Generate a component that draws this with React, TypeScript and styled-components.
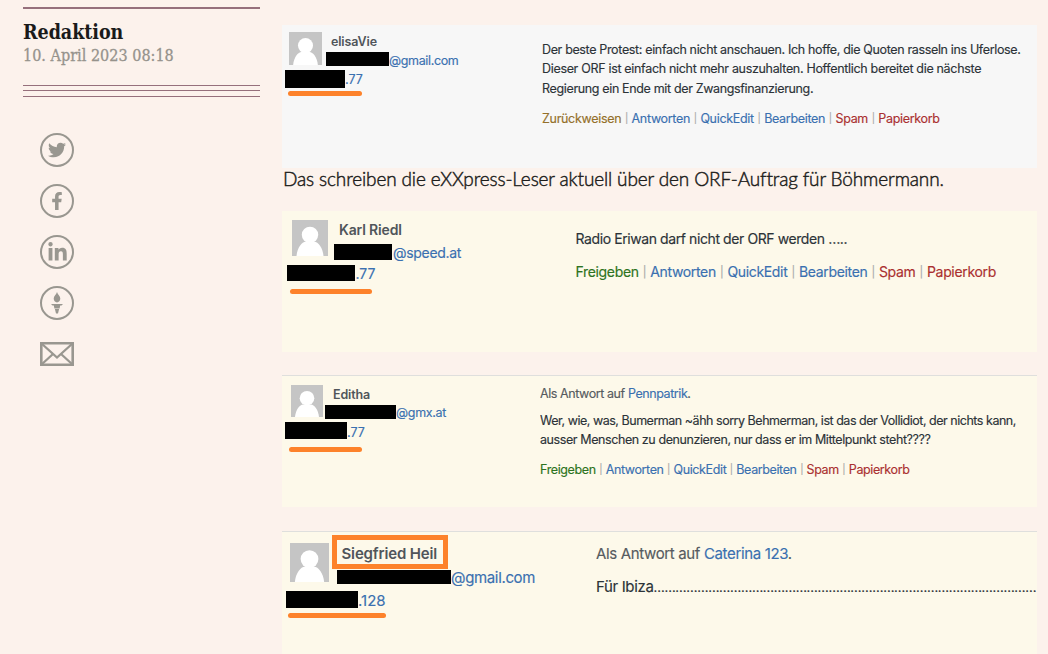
import React, { ReactElement } from 'react'
import styled, { createGlobalStyle } from 'styled-components'
import { FaFacebookF, FaLinkedinIn, FaTwitter } from 'react-icons/fa'

const linkBlue = '#3a70b0'
const marker = '#fd822b'
const iconGrey = '#999790'
const rule = '#96707c'

const GlobalStyle = createGlobalStyle`
  * {
    box-sizing: border-box;
  }

  body {
    margin: 0;
    background: #fcf2ec;
    overflow: hidden;
  }
`

const Page = styled.div`
  display: flex;
  width: 1048px;
  height: 654px;
  overflow: hidden;
`

const Sidebar = styled.aside`
  width: 260px;
  padding: 7px 0 0 23px;
  flex-shrink: 0;
`

const Byline = styled.div`
  height: 79px;
  border-top: 2px solid ${rule};
  padding-top: 10px;
  font-family: 'DejaVu Serif Condensed', 'DejaVu Serif', serif;
  font-stretch: condensed;
  white-space: nowrap;
`

const Source = styled.div`
  font-size: 19.5px;
  line-height: 27px;
  font-weight: 700;
  letter-spacing: -0.05px;
  color: #1a1a1a;
`

const PublishedAt = styled.div`
  font-size: 16px;
  line-height: 20px;
  letter-spacing: 0.02px;
  color: #96938c;
  -webkit-text-stroke: 0.3px #96938c;
`

const TripleRule = styled.div`
  height: 12px;
  margin-top: -1px;
  border-top: 1px solid ${rule};
  border-bottom: 1px solid ${rule};

  &::before {
    content: '';
    display: block;
    margin-top: 4px;
    border-top: 1px solid ${rule};
  }
`

const ShareList = styled.div`
  display: flex;
  flex-direction: column;
  gap: 17px;
  padding: 36px 0 0 17px;
`

const ShareButton = styled.a<{ $plain?: boolean }>`
  display: flex;
  align-items: center;
  justify-content: center;
  width: 34px;
  height: 34px;
  border: ${({ $plain }) => ($plain ? 'none' : `2px solid ${iconGrey}`)};
  border-radius: 50%;
  color: ${iconGrey};
`

const Main = styled.main`
  width: 755px;
  margin-left: 22px;
  padding-top: 25px;
  flex-shrink: 0;
`

const Teaser = styled.p`
  margin: 0;
  height: 43px;
  padding-left: 1px;
  font-family: Lato, sans-serif;
  font-size: 19px;
  font-weight: 300;
  line-height: 22px;
  letter-spacing: -0.135px;
  color: #1d1d1b;
  -webkit-text-stroke: 0.45px #1d1d1b;
  white-space: nowrap;
`

const Card = styled.section<{ $height: number; $bg?: string; $ruled?: boolean; $gap?: number }>`
  display: flex;
  height: ${({ $height }) => $height}px;
  margin-bottom: ${({ $gap = 0 }) => $gap}px;
  background: ${({ $bg = '#fdf9ea' }) => $bg};
  border-top: ${({ $ruled }) => ($ruled ? '1px solid #dfdfdd' : 'none')};
  overflow: hidden;
  font-family: Inter, 'Liberation Sans', sans-serif;
  white-space: nowrap;
`

const AuthorCol = styled.div<{ $width: number; $top: number }>`
  width: ${({ $width }) => $width}px;
  padding-top: ${({ $top }) => $top}px;
  flex-shrink: 0;
`

const Identity = styled.div<{ $left: number; $height: number }>`
  display: flex;
  height: ${({ $height }) => $height}px;
  padding-left: ${({ $left }) => $left}px;
`

const AvatarBox = styled.svg`
  display: block;
  flex-shrink: 0;
`

const Contact = styled.div`
  display: flex;
  flex-direction: column;
`

const Name = styled.div<{ $size: number; $left: number; $height: number }>`
  height: ${({ $height }) => $height}px;
  line-height: 20px;
  padding-left: ${({ $left }) => $left}px;
  font-size: ${({ $size }) => $size}px;
  font-weight: 600;
  letter-spacing: -0.15px;
  color: #50555a;
`

const FramedName = styled(Name)`
  width: 116px;
  height: 34px;
  line-height: 27px;
  margin: -8px 0 1px 3px;
  padding-left: 4.5px;
  border: 5px solid ${marker};
`

const Masked = styled.div<{ $left: number; $height: number; $size: number; $spacing?: number }>`
  display: flex;
  height: ${({ $height }) => $height}px;
  line-height: ${({ $height }) => $height}px;
  padding-left: ${({ $left }) => $left}px;
  font-size: ${({ $size }) => $size}px;
  letter-spacing: ${({ $spacing = 0 }) => $spacing}px;
  color: ${linkBlue};
  -webkit-text-stroke: 0.15px ${linkBlue};
`

const Bar = styled.span<{ $width: number }>`
  width: ${({ $width }) => $width}px;
  background: #000;
  flex-shrink: 0;
`

const MaskedText = styled.span<{ $shift: number; $left?: number }>`
  padding-top: ${({ $shift }) => $shift}px;
  padding-left: ${({ $left = 0 }) => $left}px;
`

const Underline = styled.div<{ $left: number; $width: number; $top: number }>`
  width: ${({ $width }) => $width}px;
  height: 5px;
  margin: ${({ $top, $left }) => `${$top}px 0 0 ${$left}px`};
  border-radius: 2.5px;
  background: ${marker};
`

const Body = styled.div<{ $size: number; $top: number; $spacing?: number }>`
  flex: 1;
  min-width: 0;
  overflow: hidden;
  padding-top: ${({ $top }) => $top}px;
  font-size: ${({ $size }) => $size}px;
  letter-spacing: ${({ $spacing = 0 }) => $spacing}px;
  color: #2c3338;
  -webkit-text-stroke: 0.15px currentColor;
`

const Line = styled.div<{ $height?: number; $spacing?: number }>`
  height: ${({ $height = 20 }) => $height}px;
  line-height: 20px;
  ${({ $spacing }) => $spacing !== undefined && `letter-spacing: ${$spacing}px;`}
`

const ReplyTo = styled(Line)`
  color: #565b60;

  a {
    color: ${linkBlue};
  }
`

const Dots = styled.span`
  font-size: 13px;
  letter-spacing: -0.3px;
`

const Actions = styled.div<{ $gap: number; $spacing: number }>`
  display: flex;
  line-height: 20px;
  letter-spacing: ${({ $spacing }) => $spacing}px;

  a + a::before {
    content: '|';
    position: relative;
    top: -1px;
    margin: 0 ${({ $gap }) => $gap}px;
    font-size: 0.8em;
    color: #a9aaa8;
  }
`

const tones = {
  approve: '#2d7320',
  reject: '#94702a',
  link: linkBlue,
  danger: '#aa3030',
}

const Action = styled.a<{ $tone: keyof typeof tones }>`
  color: ${({ $tone }) => tones[$tone]};
`

const Avatar = ({ size }: { size: number }): ReactElement => (
  <AvatarBox width={size} height={size} viewBox="0 0 32 32">
    <rect width="32" height="32" fill="#c5c5c5" />
    <circle cx="16" cy="13.2" r="7.3" fill="#fff" />
    <path d="M4 32C4.600 24.500 9 19.400 12 19.400h8c3 0 7.400 5.100 8 12.600z" fill="#fff" />
  </AvatarBox>
)

const Torch = (): ReactElement => (
  <svg width="12" height="22" viewBox="0 0 12 22" fill="currentColor">
    <path d="M6 0C6.600 2.500 9.300 3.800 9.300 6.500 9.300 8.700 7.800 10 6 10.500 4.200 10 2.700 8.700 2.700 6.500 2.700 3.800 5.400 2.500 6 0z" />
    <path d="M0 12h12l-1.500 1.500h-9zM2.800 13.500h6.400l-.6 3H3.400zM3.900 17h4.200L7 21.500H5z" />
  </svg>
)

const Envelope = (): ReactElement => (
  <svg width="34" height="24" viewBox="0 0 34 24" fill="none" stroke="currentColor" strokeWidth="2.600">
    <path d="M1.300 1.300h31.400v21.400H1.300z" />
    <path d="M1.500 1.500L17 15.500 32.500 1.500M1.500 22.500l11.500-10.500M32.500 22.500L21 12" strokeWidth="2.300" />
  </svg>
)

interface ActionBarProps {
  approved?: boolean
  gap: number
  spacing: number
}

const ActionBar = ({ approved, gap, spacing }: ActionBarProps): ReactElement => (
  <Actions $gap={gap} $spacing={spacing}>
    <Action $tone={approved ? 'reject' : 'approve'}>{approved ? 'Zurückweisen' : 'Freigeben'}</Action>
    <Action $tone="link">Antworten</Action>
    <Action $tone="link">QuickEdit</Action>
    <Action $tone="link">Bearbeiten</Action>
    <Action $tone="danger">Spam</Action>
    <Action $tone="danger">Papierkorb</Action>
  </Actions>
)

const App = (): ReactElement => (
  <>
    <GlobalStyle />
    <Page>
      <Sidebar>
        <Byline>
          <Source>Redaktion</Source>
          <PublishedAt>10. April 2023 08:18</PublishedAt>
        </Byline>
        <TripleRule />
        <ShareList>
          <ShareButton><FaTwitter size={18} /></ShareButton>
          <ShareButton><FaFacebookF size={18} /></ShareButton>
          <ShareButton><FaLinkedinIn size={21} /></ShareButton>
          <ShareButton><Torch /></ShareButton>
          <ShareButton $plain><Envelope /></ShareButton>
        </ShareList>
      </Sidebar>

      <Main>
        <Card $height={143} $bg="#f7f7f7">
          <AuthorCol $width={260} $top={7}>
            <Identity $left={7} $height={38}>
              <Avatar size={33} />
              <Contact>
                <Name $size={12.5} $left={9} $height={20}>elisaVie</Name>
                <Masked $left={4} $height={14} $size={12.5} $spacing={-0.35}>
                  <Bar $width={63} />
                  <MaskedText $shift={2}>@gmail.com</MaskedText>
                </Masked>
              </Contact>
            </Identity>
            <Masked $left={3} $height={18} $size={12.5}>
              <Bar $width={60} />
              <MaskedText $shift={1}>.77</MaskedText>
            </Masked>
            <Underline $left={6} $width={74} $top={3} />
          </AuthorCol>
          <Body $size={12.5} $top={14.6} $spacing={-0.35}>
            <Line $height={19.7}>Der beste Protest: einfach nicht anschauen. Ich hoffe, die Quoten rasseln ins Uferlose.</Line>
            <Line $height={19.7} $spacing={-0.32}>Dieser ORF ist einfach nicht mehr auszuhalten. Hoffentlich bereitet die nächste</Line>
            <Line $height={30}>Regierung ein Ende mit der Zwangsfinanzierung.</Line>
            <ActionBar approved gap={3.65} spacing={-0.31} />
          </Body>
        </Card>

        <Teaser>Das schreiben die eXXpress-Leser aktuell über den ORF-Auftrag für Böhmermann.</Teaser>

        <Card $height={141} $gap={23}>
          <AuthorCol $width={293.5} $top={9}>
            <Identity $left={10} $height={45}>
              <Avatar size={36} />
              <Contact>
                <Name $size={14} $left={11} $height={24}>Karl Riedl</Name>
                <Masked $left={6} $height={16} $size={14} $spacing={-0.3}>
                  <Bar $width={58} />
                  <MaskedText $shift={1} $left={1}>@speed.at</MaskedText>
                </Masked>
              </Contact>
            </Identity>
            <Masked $left={5} $height={16} $size={14}>
              <Bar $width={68} />
              <MaskedText $shift={1} $left={0.5}>.77</MaskedText>
            </Masked>
            <Underline $left={8} $width={82} $top={8} />
          </AuthorCol>
          <Body $size={14} $top={18} $spacing={-0.41}>
            <Line $height={33}>Radio Eriwan darf nicht der ORF werden …..</Line>
            <ActionBar gap={4.1} spacing={-0.34} />
          </Body>
        </Card>

        <Card $height={132} $gap={24} $ruled>
          <AuthorCol $width={258} $top={9}>
            <Identity $left={9} $height={37}>
              <Avatar size={32} />
              <Contact>
                <Name $size={12.5} $left={10} $height={20}>Editha</Name>
                <Masked $left={2} $height={14} $size={12.5} $spacing={-0.3}>
                  <Bar $width={71} />
                  <MaskedText $shift={1}>@gmx.at</MaskedText>
                </Masked>
              </Contact>
            </Identity>
            <Masked $left={3} $height={17} $size={12.5}>
              <Bar $width={62} />
              <MaskedText $shift={2}>.77</MaskedText>
            </Masked>
            <Underline $left={7} $width={73} $top={8} />
          </AuthorCol>
          <Body $size={12.5} $top={8} $spacing={-0.41}>
            <ReplyTo $height={27} $spacing={-0.42}>Als Antwort auf <a>Pennpatrik</a>.</ReplyTo>
            <Line $height={19} $spacing={-0.475}>Wer, wie, was, Bumerman ~ähh sorry Behmerman, ist das der Vollidiot, der nichts kann,</Line>
            <Line $height={29.6}>ausser Menschen zu denunzieren, nur dass er im Mittelpunkt steht????</Line>
            <ActionBar gap={3.5} spacing={-0.38} />
          </Body>
        </Card>

        <Card $height={130} $ruled>
          <AuthorCol $width={314} $top={11}>
            <Identity $left={8} $height={48}>
              <Avatar size={39} />
              <Contact>
                <FramedName $size={15} $left={5} $height={34}>Siegfried Heil</FramedName>
                <Masked $left={8} $height={14} $size={15} $spacing={-0.35}>
                  <Bar $width={114} />
                  <MaskedText $shift={1}>@gmail.com</MaskedText>
                </Masked>
              </Contact>
            </Identity>
            <Masked $left={4} $height={17} $size={15}>
              <Bar $width={72} />
              <MaskedText $shift={1}>.128</MaskedText>
            </Masked>
            <Underline $left={6} $width={98} $top={5} />
          </AuthorCol>
          <Body $size={15} $top={12} $spacing={-0.35}>
            <ReplyTo $height={33}>Als Antwort auf <a>Caterina 123</a>.</ReplyTo>
            <Line>Für Ibiza<Dots>{'…'.repeat(35)}</Dots></Line>
          </Body>
        </Card>
      </Main>
    </Page>
  </>
)

export default App
